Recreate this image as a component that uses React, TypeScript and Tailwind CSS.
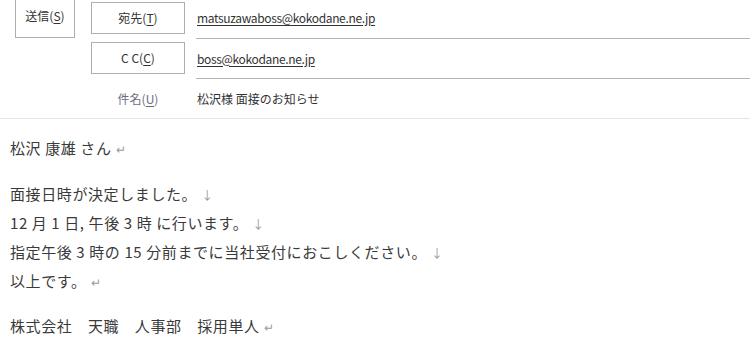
import React from 'react';

const jp = { fontFamily: '"Noto Sans CJK JP", "Noto Sans", sans-serif' };

const LabelButton: React.FC<{ label: string; mnemonic: string; className?: string }> = ({ label, mnemonic, className = '' }) => (
  <div
    className={`flex items-center justify-center border border-[#adadad] bg-white text-[12px] text-[#333] ${className}`}
  >
    {label}(<span className="underline underline-offset-2">{mnemonic}</span>)
  </div>
);

const Mark: React.FC<{ kind: 'ret' | 'down' }> = ({ kind }) => (
  <span className="ml-1 text-[12px] tracking-normal text-[#9a9a9a]">{kind === 'ret' ? '↵' : '↓'}</span>
);

const App: React.FC = () => {
  return (
    <div className="w-[750px] h-[350px] overflow-hidden bg-white" style={jp}>
      {/* header */}
      <div className="flex border-b border-[#e3e3e3]">
        <div className="pl-[15px] pr-[16px]">
          <LabelButton label="送信" mnemonic="S" className="w-[60px] h-[38px] border-t-0 pb-[6px]" />
        </div>
        <div className="flex-1 flex flex-col">
          <div className="flex h-[39px]">
            <div className="w-[105px] pt-[2px]">
              <LabelButton label="宛先" mnemonic="T" className="w-[94px] h-[32px]" />
            </div>
            <div className="flex-1 flex items-center border-b border-[#b4b4b4] pl-[1px] pb-[2px] text-[12px] tracking-[-0.35px] text-[#333]">
              <span className="underline underline-offset-2">matsuzawaboss@kokodane.ne.jp</span>
            </div>
          </div>
          <div className="flex h-[40px]">
            <div className="w-[105px] pt-[3px]">
              <LabelButton label="C C" mnemonic="C" className="w-[94px] h-[32px]" />
            </div>
            <div className="flex-1 flex items-center border-b border-[#b4b4b4] pl-[1px] text-[12px] tracking-[-0.35px] text-[#333]">
              <span className="underline underline-offset-2">boss@kokodane.ne.jp</span>
            </div>
          </div>
          <div className="flex h-[39px]">
            <div className="w-[105px] flex items-center">
              <div className="w-[94px] text-center text-[12px] text-[#6d6d80]">
                件名(<span className="underline underline-offset-2">U</span>)
              </div>
            </div>
            <div className="flex-1 flex items-center pl-[1px] text-[12px] text-[#333]">
              松沢様 面接のお知らせ
            </div>
          </div>
        </div>
      </div>

      {/* body */}
      <div className="px-[10px] pt-[15px] text-[15px] leading-[28px] tracking-[0.6px] text-[#3a3a3a]">
        <p className="mb-[17px]">
          松沢 康雄 さん<Mark kind="ret" />
        </p>
        <div className="mb-[16px]">
          <p>面接日時が決定しました。<Mark kind="down" /></p>
          <p>12 月 1 日, 午後 3 時 に行います。<Mark kind="down" /></p>
          <p>指定午後 3 時の 15 分前までに当社受付におこしください。<Mark kind="down" /></p>
          <p>以上です。<Mark kind="ret" /></p>
        </div>
        <p>
          株式会社　天職　人事部　採用単人<Mark kind="ret" />
        </p>
      </div>
    </div>
  );
};

export default App;
